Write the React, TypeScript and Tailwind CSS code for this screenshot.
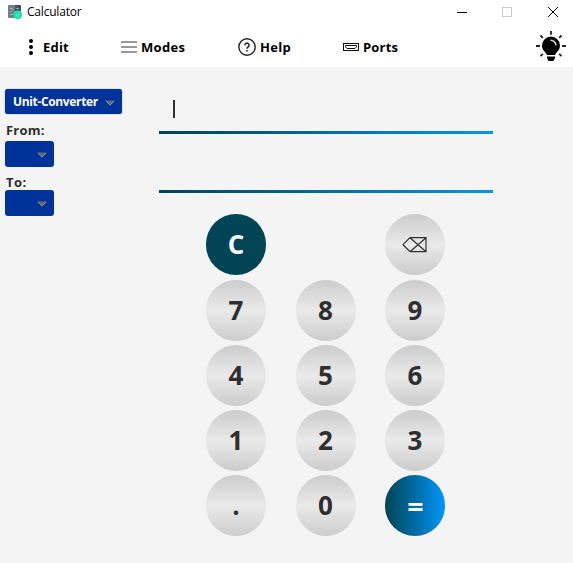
import React from "react";

function AppIcon() {
  return (
    <svg width="15" height="16" viewBox="0 0 15 16" className="shrink-0">
      <rect x="0" y="1" width="13" height="13" rx="1" fill="#6f7e88" />
      <path d="M6.5 1H12a1 1 0 0 1 1 1v6H6.500z" fill="#40505c" />
      <path d="M6.500 1v13M0 7.500h13" stroke="#84939c" strokeWidth=".6" />
      <path d="M2.500 4.500h2M8.500 4.500h2M2.500 10.500h2" stroke="#c3ced4" strokeWidth="1" />
      <circle cx="9.800" cy="10.800" r="4.400" fill="#1de2ae" />
      <path d="m8 10.900 1.300 1.200 2.200-2.600" fill="none" stroke="#67f2d0" strokeWidth=".9" />
    </svg>
  );
}

function Bulb() {
  return (
    <svg width="30" height="30" viewBox="0 0 30 30">
      <path
        d="M15 0v3.800M0 15h4M26 15h4M4.500 4.500l2.300 2.300M25.500 4.500l-2.300 2.300M4.500 25.200l2.300-2.300M25.500 25.200l-2.300-2.300"
        stroke="#222"
        strokeWidth="1.800"
      />
      <path
        d="M15 5.500a9 9 0 0 0-9 9c0 3.300 1.700 5.400 3.600 7.200.7.700 1 1.300 1.200 2.300h8.400c.2-1 .5-1.600 1.200-2.300 1.900-1.800 3.600-3.900 3.600-7.200a9 9 0 0 0-9-9z"
        fill="#000"
      />
      <path d="M14.500 9.300c3 .1 5 2.200 5.500 5" fill="none" stroke="#ddd" strokeWidth="1.500" />
      <path d="M11 25.500h8v1.500l-1.500 2.900h-5L11 27z" fill="#000" />
    </svg>
  );
}

function Arrow() {
  return (
    <svg width="10" height="6" viewBox="0 0 10 6" className="shrink-0">
      <path d="M.5.500h9L5 5.200z" fill="#66676a" />
      <path d="M.7.800 5 5.200 9.300.800" fill="none" stroke="#aaa9a5" strokeWidth=".8" />
    </svg>
  );
}

function Dropdown() {
  return (
    <button className="flex h-[26px] w-[49px] items-center justify-end rounded-[3px] bg-[#003399] pt-px pr-[7px]">
      <Arrow />
    </button>
  );
}

const face = "flex h-[61px] w-[60px] items-center justify-center rounded-full pb-[2px] text-[26px] leading-none font-bold";
const grey = "bg-linear-to-b from-[#cccccc] via-[#eaeaea] to-[#cccccc] text-[#2f2f2f]";

function Key({ label }: { label: string }) {
  return (
    <button className={`${face} ${grey}`}>
      <span>{label}</span>
    </button>
  );
}

const rows = [
  ["7", "8", "9"],
  ["4", "5", "6"],
  ["1", "2", "3"],
];

export default function App() {
  return (
    <div className="flex h-[563px] w-[573px] flex-col overflow-hidden bg-[#f4f4f4] font-['Open_Sans','Noto_Sans',sans-serif]">
      <header className="h-[67px] shrink-0 bg-white text-black">
        <div className="flex h-[23px] items-center pl-2">
          <AppIcon />
          <span className="ml-1 w-[60px] text-[12px] leading-4 tracking-[-0.2px]">Calculator</span>
          <svg width="104" height="12" viewBox="0 0 104 12" className="mr-[13px] ml-auto" shapeRendering="crispEdges">
            <path d="M1 6.500h10" stroke="#000" />
            <rect x="46.500" y="1.500" width="9" height="9" fill="none" stroke="#cccccc" />
            <path d="m92 1 10 10M102 1 92 11" stroke="#000" shapeRendering="auto" />
          </svg>
        </div>
        <nav className="flex h-[44px] items-center pt-1 text-[13px] leading-5 font-bold">
          <div className="ml-[28px] flex w-[93px] items-center">
            <svg width="6" height="16" viewBox="0 0 6 16">
              <circle cx="3" cy="2" r="2" />
              <circle cx="3" cy="8" r="2" />
              <circle cx="3" cy="14" r="2" />
            </svg>
            <span className="ml-[9px] tracking-[0.2px]">Edit</span>
          </div>
          <div className="flex w-[117px] items-center">
            <svg width="16" height="12" viewBox="0 0 16 12">
              <path d="M0 1h16M0 6h16M0 11h16" stroke="#777" strokeWidth="1.700" />
            </svg>
            <span className="ml-1 tracking-[0.3px]">Modes</span>
          </div>
          <div className="flex w-[105px] items-center">
            <svg width="18" height="18" viewBox="0 0 18 18" fill="none" stroke="#222">
              <circle cx="9" cy="9" r="8.200" strokeWidth="1.400" />
              <path d="M6.900 7.200a2.100 2.100 0 1 1 3.300 1.700C9.300 9.500 9 9.800 9 10.700" strokeWidth="1.500" />
              <path d="M9 12v1.500" strokeWidth="1.600" />
            </svg>
            <span className="ml-1 tracking-[0.3px]">Help</span>
          </div>
          <div className="flex items-center">
            <svg width="16" height="8" viewBox="0 0 16 8" fill="none" stroke="#111">
              <rect x=".5" y=".5" width="15" height="7" />
              <path d="M2.500 2.500h11v1.300l-1.500 1.700H4L2.500 3.800z" />
            </svg>
            <span className="ml-1 tracking-[0.2px]">Ports</span>
          </div>
          <div className="mr-[7px] ml-auto pb-[2px]">
            <Bulb />
          </div>
        </nav>
      </header>

      <main className="flex flex-1">
        <aside className="flex w-[159px] shrink-0 flex-col items-start pt-[22px] pl-[5px] text-[#2f2f2f]">
          <button className="flex h-[25px] w-[117px] items-center justify-between rounded-[3px] bg-[#003399] pr-[7px] pl-2 text-[12px] font-bold text-white shadow-[0_0_1px_#003399]">
            <span className="tracking-[-0.35px]">Unit-Converter</span>
            <span className="pt-[2px]">
              <Arrow />
            </span>
          </button>
          <span className="mt-[7px] ml-px h-5 text-[13px] leading-[18px] font-bold tracking-[0.2px]">From:</span>
          <Dropdown />
          <span className="mt-[6px] ml-px h-[17px] text-[13px] leading-[18px] font-bold tracking-[0.5px]">To:</span>
          <Dropdown />
        </aside>
        <section className="flex flex-col">
          <div className="flex h-[64px] w-[334px] pt-[33px] pl-[14px]">
            <div className="h-[18px] w-[2px] bg-[#2f2f2f]" />
          </div>
          <div className="h-[3px] w-[334px] bg-linear-to-r from-[#004456] to-[#0096fa]" />
          <div className="mt-[56px] h-[3px] w-[334px] bg-linear-to-r from-[#004456] to-[#0096fa]" />
          <div className="mt-[21px] ml-[47px] flex w-[239px] justify-between">
            <button className={`${face} bg-[#004456] text-white`}>
              <span>C</span>
            </button>
            <button className={`${face} ${grey}`}>
              <svg width="25" height="16" viewBox="0 0 25 16" fill="none" stroke="#2f2f2f" strokeWidth="1.200" className="mr-px mt-[2px]">
                <path d="M8 .700h16v14H8L1 7.700zM8 .700l16 14M24 .700 8 14.700" />
              </svg>
            </button>
          </div>
          <div className="mt-[5px] ml-[47px] flex w-[239px] flex-col gap-1">
            {rows.map((row) => (
              <div key={row[0]} className="flex justify-between">
                {row.map((n) => (
                  <Key key={n} label={n} />
                ))}
              </div>
            ))}
            <div className="flex justify-between">
              <Key label="." />
              <Key label="0" />
              <button className={`${face} bg-linear-to-r from-[#004456] to-[#0096fa] text-white`}>
                <span className="scale-x-110 pt-1">=</span>
              </button>
            </div>
          </div>
        </section>
      </main>
    </div>
  );
}
